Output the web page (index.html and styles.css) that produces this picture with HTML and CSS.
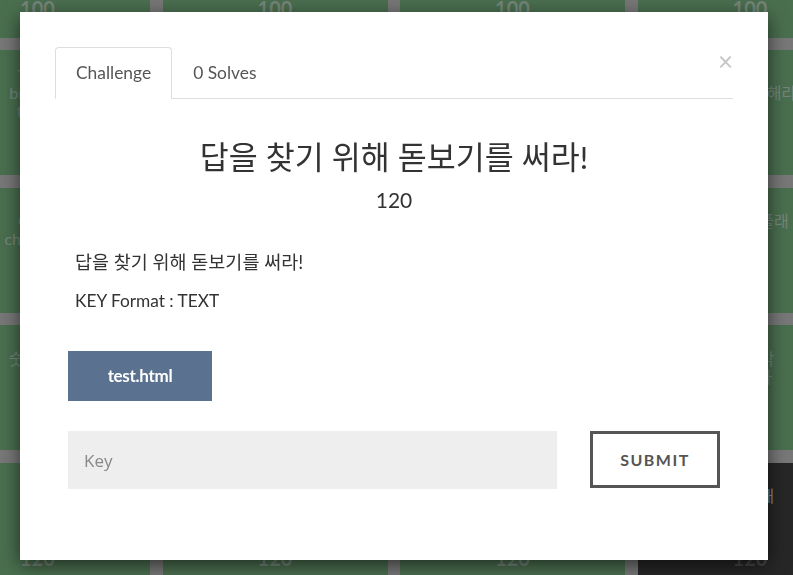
FILE: index.html
```html
<!DOCTYPE html>
<html lang="ko">
<head>
  <meta charset="UTF-8">
  <title>Challenge</title>
  <link rel="stylesheet" href="styles.css">
</head>

<body>
  <!-- Board behind the modal -->
  <div class="board">
    <div class="tile"><div class="tile-name">Warm up</div><div class="tile-value">100</div></div>
    <div class="tile"><div class="tile-name">Hello</div><div class="tile-value">100</div></div>
    <div class="tile"><div class="tile-name">Start</div><div class="tile-value">100</div></div>
    <div class="tile"><div class="tile-name">First</div><div class="tile-value">100</div></div>

    <div class="tile"><div class="tile-name">Three<br>brewers<br>throw</div><div class="tile-value">110</div></div>
    <div class="tile"><div class="tile-name">Web</div><div class="tile-value">110</div></div>
    <div class="tile"><div class="tile-name">Easy</div><div class="tile-value">110</div></div>
    <div class="tile"><div class="tile-name">빨리빨리 해라</div><div class="tile-value">110</div></div>

    <div class="tile"><div class="tile-name">Great<br>challenge</div><div class="tile-value">110</div></div>
    <div class="tile"><div class="tile-name">Forensic</div><div class="tile-value">110</div></div>
    <div class="tile"><div class="tile-name">Crypto</div><div class="tile-value">110</div></div>
    <div class="tile"><div class="tile-name">그림을 플래<br>그...</div><div class="tile-value">110</div></div>

    <div class="tile"><div class="tile-name">숫자 0이<br>그</div><div class="tile-value">120</div></div>
    <div class="tile"><div class="tile-name">Misc</div><div class="tile-value">120</div></div>
    <div class="tile"><div class="tile-name">Reverse</div><div class="tile-value">120</div></div>
    <div class="tile"><div class="tile-name">잘 생각<br>합니다</div><div class="tile-value">120</div></div>

    <div class="tile"><div class="tile-name">그림<br>수</div><div class="tile-value">120</div></div>
    <div class="tile"><div class="tile-name">Stego</div><div class="tile-value">120</div></div>
    <div class="tile"><div class="tile-name">Pwn</div><div class="tile-value">120</div></div>
    <div class="tile solved"><div class="tile-name">답을 해<br>라!</div><div class="tile-value">120</div></div>
  </div>

  <!-- Challenge modal -->
  <div class="modal">
    <span class="close">&times;</span>

    <div class="tabs">
      <div class="tab active">Challenge</div>
      <div class="tab">0 Solves</div>
    </div>

    <h2 class="chal-name">답을 찾기 위해 돋보기를 써라!</h2>
    <div class="chal-value">120</div>

    <div class="chal-desc">
      <p class="ko">답을 찾기 위해 돋보기를 써라!</p>
      <p>KEY Format : TEXT</p>
    </div>

    <div class="files">
      <a href="#" class="file-btn">test.html</a>
    </div>

    <div class="submit-row">
      <input class="key-input" type="text" placeholder="Key">
      <button class="submit-btn">SUBMIT</button>
    </div>
  </div>
</body>
</html>
```

FILE: styles.css
```css
/* ===============================
   BASE
=============================== */
html, body {
  margin: 0;
  padding: 0;
  height: 100%;
  overflow: hidden;
}
body {
  background: #787878;
  font-family: Lato, "Noto Sans CJK KR", sans-serif;
  color: #333;
}

/* ===============================
   BOARD (dimmed, behind modal)
=============================== */
.board {
  display: grid;
  grid-template-columns: repeat(4, 225px);
  grid-auto-rows: 125px;
  gap: 12.5px;
  margin: -87.5px 0 0 -75px;
}
.tile {
  display: flex;
  flex-direction: column;
  align-items: center;
  background: #4a6f4f;
  color: #76867a;
  padding: 0 8px 20px;
  box-sizing: border-box;
  text-align: center;
}
.tile.solved {
  background: #272727;
  color: #8a8a8a;
}
.tile-name {
  flex: 1;
  display: flex;
  align-items: center;
  font-size: 16px;
  line-height: 18px;
  white-space: nowrap;
}
.tile-value {
  font-size: 20px;
  font-weight: bold;
  line-height: 20px;
}
.tile.solved .tile-value {
  color: #464646;
}

/* ===============================
   MODAL
=============================== */
.modal {
  position: fixed;
  left: 20px;
  top: 12px;
  width: 748px;
  height: 548px;
  box-sizing: border-box;
  padding: 35px;
  background: #fff;
  box-shadow: 0 5px 18px rgba(0, 0, 0, 0.6);
}
.close {
  position: absolute;
  top: 36px;
  right: 35px;
  font-size: 26px;
  line-height: 26px;
  color: #c4c4c4;
}

/* Tabs */
.tabs {
  display: flex;
  border-bottom: 1px solid #ddd;
}
.tab {
  padding: 14px 20px;
  font-size: 17.4px;
  line-height: 22px;
  color: #555;
  border: 1px solid transparent;
  border-radius: 4px 4px 0 0;
  margin-bottom: -1px;
}
.tab.active {
  border-color: #ddd;
  border-bottom-color: #fff;
}

/* Title + value */
.chal-name {
  margin: 38px 0 0;
  text-align: center;
  font-size: 31.5px;
  font-weight: normal;
  line-height: 40px;
  color: #333;
}
.chal-value {
  text-align: center;
  font-size: 21px;
  line-height: 26px;
  margin-top: 10px;
}

/* Description */
.chal-desc {
  padding: 0 20px;
  margin-top: 37px;
}
.chal-desc p {
  margin: 0 0 15px;
  font-size: 17.3px;
  line-height: 24px;
}
.chal-desc p.ko {
  font-size: 18.5px;
}

/* File download */
.files {
  padding: 0 13px;
  margin-top: 38px;
}
.file-btn {
  display: inline-block;
  width: 144px;
  height: 50px;
  line-height: 50px;
  text-align: center;
  background: #5b7190;
  color: #fff;
  font-weight: bold;
  font-size: 17px;
  letter-spacing: -0.3px;
  text-decoration: none;
}

/* Key + submit */
.submit-row {
  display: flex;
  justify-content: space-between;
  padding: 0 13px;
  margin-top: 30px;
}
.key-input {
  width: 489px;
  height: 58px;
  box-sizing: border-box;
  border: none;
  background: #eee;
  padding: 0 16px;
  font-family: "Open Sans", sans-serif;
  font-size: 17px;
  color: #555;
  outline: none;
}
.key-input::placeholder {
  color: #888;
}
.submit-btn {
  width: 130px;
  height: 57px;
  box-sizing: border-box;
  background: #fff;
  border: 3px solid #555;
  font-family: Lato, sans-serif;
  font-weight: bold;
  font-size: 16px;
  letter-spacing: 1.5px;
  color: #555;
}
```
